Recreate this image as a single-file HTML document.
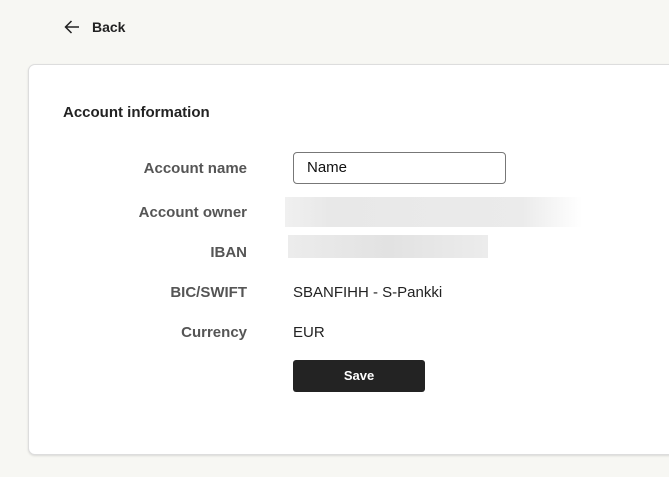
<!DOCTYPE html>
<html><head><meta charset="utf-8"><style>
*{margin:0;padding:0;box-sizing:border-box}
body{width:669px;height:477px;background:#f7f7f3;font-family:"Liberation Sans",sans-serif;position:relative;overflow:hidden}
.back{position:absolute;left:64px;top:19px;display:flex;align-items:center;font-size:14px;font-weight:bold;color:#222}
.back svg{margin-right:12px}
.card{position:absolute;left:28px;top:64px;width:700px;height:391px;background:#fff;border:1px solid #ddd;border-radius:7px;box-shadow:0 1px 2px rgba(0,0,0,.12)}
h2{position:absolute;left:34px;top:39px;font-size:15px;font-weight:bold;color:#222}
.lbl{position:absolute;right:480px;font-size:15px;font-weight:bold;color:#555;white-space:nowrap}
.val{position:absolute;left:264px;font-size:15px;color:#222}
.inp{position:absolute;left:264px;top:87px;width:213px;height:32px;border:1px solid #777;border-radius:4px;font-size:15px;color:#111;padding:6px 0 0 13px}
.blur1{position:absolute;left:256px;top:132px;width:297px;height:30px;background:linear-gradient(90deg,#f0f0f0,#e8e8e8 15%,#ebebeb 80%,#fff)}
.blur2{position:absolute;left:259px;top:170px;width:200px;height:23px;background:linear-gradient(90deg,#ececec,#e2e2e2 50%,#ececec)}
.btn{position:absolute;left:264px;top:295px;width:132px;height:32px;background:#232323;border-radius:3px;color:#fff;font-size:13px;font-weight:bold;text-align:center;line-height:32px}
</style></head><body>
<div class="back"><svg width="16" height="14" viewBox="0 0 16 14"><path d="M15 7H1.5M7.5 1L1.5 7l6 6" fill="none" stroke="#222" stroke-width="1.5"/></svg>Back</div>
<div class="card">
<h2>Account information</h2>
<div class="lbl" style="top:95px">Account name</div>
<div class="inp">Name</div>
<div class="lbl" style="top:139px">Account owner</div>
<div class="blur1"></div>
<div class="lbl" style="top:179px">IBAN</div>
<div class="blur2"></div>
<div class="lbl" style="top:219px">BIC/SWIFT</div>
<div class="val" style="top:219px">SBANFIHH - S-Pankki</div>
<div class="lbl" style="top:259px">Currency</div>
<div class="val" style="top:259px">EUR</div>
<div class="btn">Save</div>
</div>
</body></html>
